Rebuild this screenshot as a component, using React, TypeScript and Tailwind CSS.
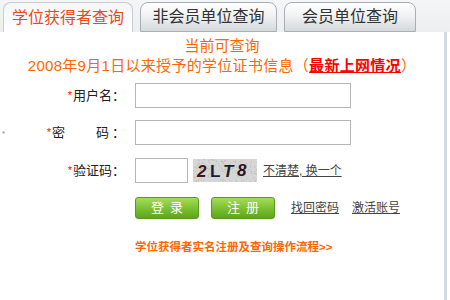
import React from 'react';

const font = { fontFamily: '"Liberation Sans", "Noto Sans CJK SC", sans-serif' };

function Captcha() {
  const dots: { x: number; y: number; c: string }[] = [];
  let seed = 7;
  const rnd = () => {
    seed = (seed * 9301 + 49297) % 233280;
    return seed / 233280;
  };
  const colors = ['#9ad39a', '#b8b8e0', '#e0a0a0', '#a0c8a0', '#c0c0c0', '#7fcf7f'];
  for (let i = 0; i < 140; i++) {
    dots.push({ x: rnd() * 64, y: rnd() * 23, c: colors[Math.floor(rnd() * colors.length)] });
  }
  return (
    <svg width="64" height="23" viewBox="0 0 64 23" className="block">
      <rect width="64" height="23" fill="#d6d6d6" />
      {dots.map((d, i) => (
        <rect key={i} x={d.x} y={d.y} width="1" height="1" fill={d.c} />
      ))}
      <text x="4" y="18" fontFamily="Liberation Sans, sans-serif" fontWeight="bold" fontSize="17" fill="#4a1020" fontStyle="italic">2</text>
      <text x="17" y="18" fontFamily="Liberation Sans, sans-serif" fontWeight="bold" fontSize="17" fill="#1a1a40">L</text>
      <text x="30" y="18" fontFamily="Liberation Sans, sans-serif" fontWeight="bold" fontSize="17" fill="#202020" fontStyle="italic">T</text>
      <text x="44" y="17" fontFamily="Liberation Sans, sans-serif" fontWeight="bold" fontSize="17" fill="#301020" fontStyle="italic">8</text>
    </svg>
  );
}

function Label({ children, className = '' }: { children: React.ReactNode; className?: string }) {
  return (
    <div className={`flex items-center justify-end text-[13px] text-[#222] ${className}`}>
      <span className="text-[#ff0000] text-[11px] mr-px">*</span>
      {children}
    </div>
  );
}

export default function App() {
  return (
    <div style={font} className="w-[450px] h-[300px] overflow-hidden bg-white relative">
      {/* Tabs */}
      <div className="flex items-end gap-[7px] pl-[3px] h-[32px] bg-gradient-to-b from-[#f4f5f6] to-[#eceef0]">
        <div className="w-[130px] h-[30px] rounded-t-[8px] border border-b-0 border-[#c9cdd1] bg-gradient-to-b from-[#f6f6f6] to-white flex items-center justify-center text-[16px] text-[#e84a18]">
          学位获得者查询
        </div>
        <div className="w-[137px] h-[30px] rounded-t-[8px] border border-[#a9aeb3] bg-gradient-to-b from-white via-[#eef0f1] to-[#d5d9dc] flex items-center justify-center text-[16px] text-[#333]">
          非会员单位查询
        </div>
        <div className="w-[132px] h-[30px] rounded-t-[8px] border border-[#a9aeb3] bg-gradient-to-b from-white via-[#eef0f1] to-[#d5d9dc] flex items-center justify-center text-[16px] text-[#333]">
          会员单位查询
        </div>
      </div>

      {/* Content */}
      <div className="w-[447px] h-[268px] border-r-[3px] border-[#d3dbe1] bg-white">
        <div className="pt-[4px] text-center text-[15px] leading-[20px] text-[#ff6600]">
          <div>当前可查询</div>
          <div className="tracking-[0.3px]">
            2008年9月1日以来授予的学位证书信息（
            <span className="text-[#ff0000] font-bold underline">最新上网情况</span>）
          </div>
        </div>

        <div className="mt-[7px] grid grid-cols-[125px_1fr] gap-x-[10px] items-center">
          <Label>用户名：</Label>
          <input className="w-[216px] h-[25px] border border-[#b5b5b5] outline-none" />

          <div className="mt-[12px] flex items-center justify-end text-[13px] text-[#222]">
            <span className="text-[#ff0000] text-[11px] mr-px">*</span>
            <span className="w-[60px] flex justify-between">
              <span>密</span>
              <span className="mr-[3px]">码</span>
            </span>
            <span>：</span>
          </div>
          <input className="mt-[12px] w-[216px] h-[25px] border border-[#b5b5b5] outline-none" />

          <Label className="mt-[13px]">验证码：</Label>
          <div className="mt-[13px] flex items-center">
            <input className="w-[53px] h-[25px] border border-[#b5b5b5] outline-none" />
            <div className="ml-[5px]">
              <Captcha />
            </div>
            <a className="ml-[6px] text-[12px] text-[#444] underline cursor-pointer">不清楚, 换一个</a>
          </div>

          <div />
          <div className="mt-[14px] flex items-center">
            <button className="w-[64px] h-[22px] rounded-[3px] border border-[#5a9a1a] bg-gradient-to-b from-[#a6dc5a] via-[#7cc232] to-[#5ea51c] text-white text-[13px] tracking-[6px] pl-[6px]">
              登录
            </button>
            <button className="ml-[12px] w-[64px] h-[22px] rounded-[3px] border border-[#5a9a1a] bg-gradient-to-b from-[#a6dc5a] via-[#7cc232] to-[#5ea51c] text-white text-[13px] tracking-[6px] pl-[6px]">
              注册
            </button>
            <a className="ml-[16px] text-[12px] text-[#444] underline cursor-pointer">找回密码</a>
            <a className="ml-[13px] text-[12px] text-[#444] underline cursor-pointer">激活账号</a>
          </div>

          <div />
          <div className="mt-[20px] text-[11.5px] font-bold text-[#ff6600]">
            学位获得者实名注册及查询操作流程&gt;&gt;
          </div>
        </div>
      </div>

      <span className="absolute left-[2px] top-[128px] text-[8px] text-[#888]">*</span>
    </div>
  );
}
